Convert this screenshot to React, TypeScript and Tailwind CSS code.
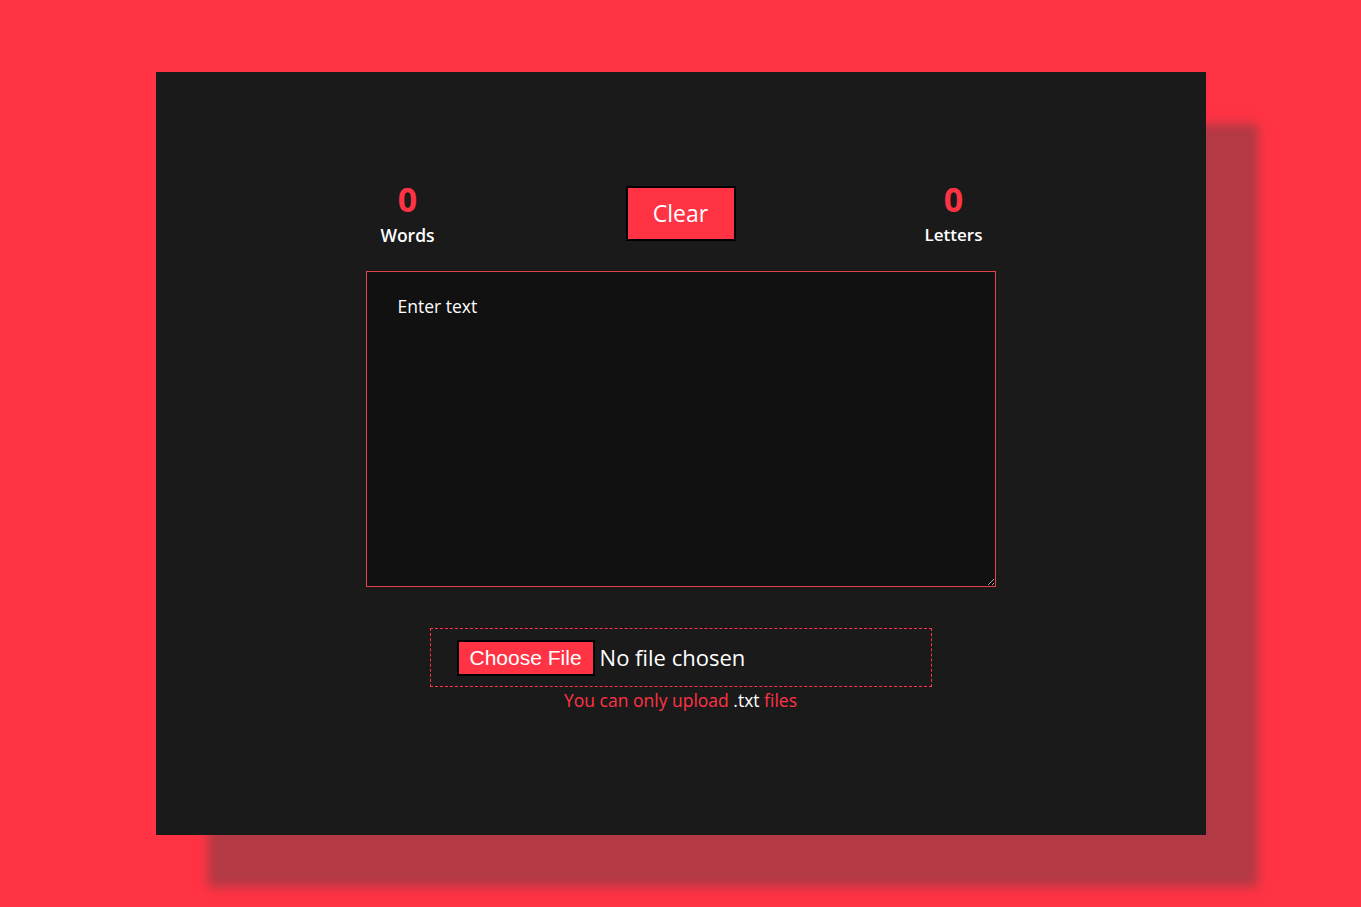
import React from "react";

export default function App() {
  const font = { fontFamily: '"Open Sans", "DejaVu Sans", sans-serif' };
  return (
    <div className="min-h-screen w-full bg-[#ff3344] pt-[72px]" style={font}>
      <div className="mx-auto flex h-[763px] w-[1050px] flex-col items-center bg-[#1a1a1a] pt-[107px] shadow-[52px_52px_10px_#b33a44]">
        <div className="w-[630px]">
          <div className="flex items-start justify-between">
            <div className="flex w-[84px] flex-col items-center">
              <span className="text-[34px] font-bold leading-[40px] text-[#ff3344]">0</span>
              <span className="mt-[6px] text-[17.5px] font-semibold leading-[20px] text-white">Words</span>
            </div>
            <button className="mt-[7px] h-[55px] w-[110px] border-2 border-black bg-[#ff3344] text-[23px] text-white">
              Clear
            </button>
            <div className="flex w-[84px] flex-col items-center">
              <span className="text-[34px] font-bold leading-[40px] text-[#ff3344]">0</span>
              <span className="mt-[6px] text-[17px] font-semibold leading-[20px] text-white">Letters</span>
            </div>
          </div>
          <textarea
            className="mt-[26px] block h-[316px] w-[630px] border border-[#e3414c] bg-[#111111] px-[31px] py-[21px] text-[17.5px] font-medium text-white outline-none placeholder:text-white"
            placeholder="Enter text"
          />
        </div>
        <div className="mt-[41px] flex h-[59px] w-[502px] items-center border border-dashed border-[#ff3344] pl-[26px]">
          <span
            className="flex h-[36px] items-center border-2 border-black bg-[#ff3344] px-[11px] text-[21px] text-white"
            style={{ fontFamily: '"Liberation Sans", Arial, sans-serif' }}
          >
            Choose File
          </span>
          <span className="ml-[5px] text-[22px] text-white">No file chosen</span>
        </div>
        <p className="mt-[1px] text-[17.5px] leading-[24px] text-[#ff3344]">
          You can only upload <span className="text-white">.txt</span> files
        </p>
      </div>
    </div>
  );
}
